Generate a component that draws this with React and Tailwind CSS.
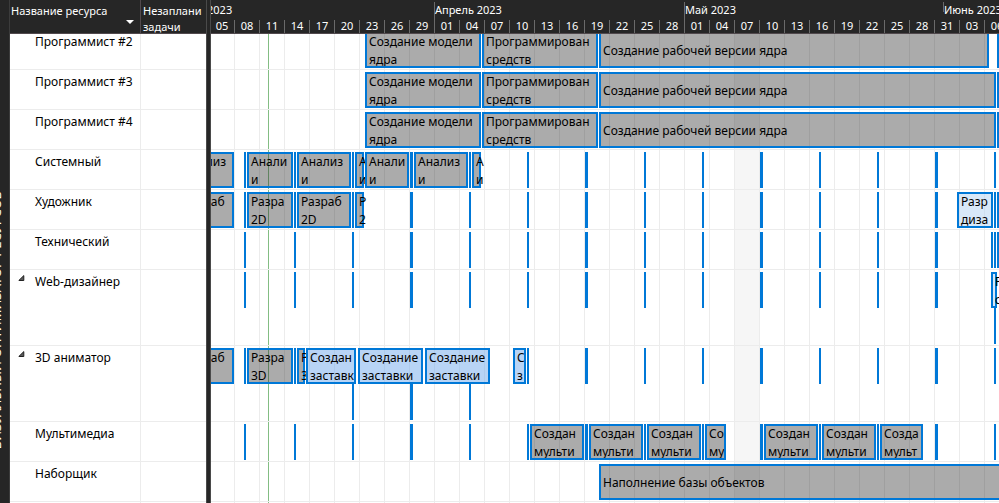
const ORIGIN = 211;
const TICKS = [244, 294, 352, 410, 469, 527, 585, 644, 702, 760, 819, 877, 935, 994];
const WIDE_TICKS = [410, 585, 760, 935];

const FILLS = {
  gray: "bg-[#2d2d2d]/40",
  blue: "bg-[#71a9eb]/50",
  light: "bg-[#b1d1f1]/50",
};

const engineBars = (end) => [
  { from: 365, to: 481, lines: ["Создание модели", "ядра"] },
  { from: 482, to: 598, lines: ["Программирован", "средств"] },
  { from: 599, to: end, lines: ["Создание рабочей версии ядра"] },
];

const ROWS = [
  { name: "Программист #2", bars: engineBars(989), ticks: [997] },
  { name: "Программист #3", bars: engineBars(996), ticks: [997] },
  { name: "Программист #4", bars: engineBars(996), ticks: [997] },
  {
    name: "Системный",
    ticks: TICKS,
    bars: [
      { from: 180, to: 234, lines: ["Анализ", "и"] },
      { from: 247, to: 293, lines: ["Анали", "и"] },
      { from: 297, to: 351, lines: ["Анализ", "и"] },
      { from: 355, to: 364, lines: ["А", "и"] },
      { from: 365, to: 409, lines: ["Анали", "и"] },
      { from: 414, to: 468, lines: ["Анализ", "и"] },
      { from: 472, to: 481, lines: ["А", "и"] },
    ],
  },
  {
    name: "Художник",
    ticks: [...TICKS, 997],
    bars: [
      { from: 180, to: 234, lines: ["Разраб", "2D"] },
      { from: 247, to: 293, lines: ["Разра", "2D"] },
      { from: 297, to: 351, lines: ["Разраб", "2D"] },
      { from: 355, to: 364, lines: ["Р", "2"] },
      { from: 957, to: 993, fill: "light", lines: ["Разр", "диза"] },
    ],
  },
  { name: "Технический", ticks: [...TICKS, 991, 997], bars: [] },
  {
    name: "Web-дизайнер",
    tall: true,
    ticks: TICKS.filter((x) => x !== 994),
    lowerTicks: [994],
    bars: [{ from: 991, to: 997, fill: "light", lines: ["Р", "с"] }],
  },
  {
    name: "3D аниматор",
    tall: true,
    ticks: TICKS.filter((x) => ![352, 410, 469].includes(x)),
    lowerTicks: [352, 410, 469],
    bars: [
      { from: 180, to: 234, lines: ["Разраб", "3D"] },
      { from: 247, to: 293, lines: ["Разра", "3D"] },
      { from: 297, to: 305, lines: ["Р", "3"] },
      { from: 306, to: 356, fill: "blue", lines: ["Создан", "заставк"] },
      { from: 358, to: 423, fill: "blue", lines: ["Создание", "заставки"] },
      { from: 425, to: 490, fill: "blue", lines: ["Создание", "заставки"] },
      { from: 513, to: 526, fill: "blue", lines: ["С", "з"] },
    ],
  },
  {
    name: "Мультимедиа",
    ticks: TICKS,
    bars: [
      { from: 530, to: 584, lines: ["Создан", "мульти"] },
      { from: 589, to: 643, lines: ["Создан", "мульти"] },
      { from: 647, to: 701, lines: ["Создан", "мульти"] },
      { from: 705, to: 726, lines: ["Со", "му"] },
      { from: 764, to: 818, lines: ["Создан", "мульти"] },
      { from: 822, to: 876, lines: ["Создан", "мульти"] },
      { from: 880, to: 923, lines: ["Созда", "мульт"] },
    ],
  },
  { name: "Наборщик", ticks: [], bars: [{ from: 599, to: 1100, lines: ["Наполнение базы объектов"] }] },
  { name: "", ticks: [], bars: [] },
];

const DAYS = [
  "05", "08", "11", "14", "17", "20", "23", "26", "29", "01", "04", "07", "10", "13", "16", "19",
  "22", "25", "28", "01", "04", "07", "10", "13", "16", "19", "22", "25", "28", "31", "03", "06",
];

function Bar({ from, to, fill = "gray", lines }) {
  const clip = to - from > 14 ? "overflow-hidden" : "";
  return (
    <div
      className={`absolute top-[2px] flex h-9 flex-col justify-center border-2 border-[#0078d7] pt-[2px] pl-[2px] whitespace-nowrap ${FILLS[fill]} ${clip}`}
      style={{ left: from - ORIGIN, width: to - from }}
    >
      {lines.map((line, i) => (
        <div key={i} className="h-[18px] shrink-0 leading-[18px]">
          {line}
        </div>
      ))}
    </div>
  );
}

function Tick({ x, lower }) {
  return (
    <div
      className={`absolute h-9 bg-[#0078d7] ${lower ? "top-[38px]" : "top-[2px]"} ${WIDE_TICKS.includes(x) ? "w-[3px]" : "w-[2px]"}`}
      style={{ left: x - ORIGIN }}
    />
  );
}

const rowHeight = (row) => (row.tall ? "h-[76px]" : "h-10");

function ResourceTable() {
  return (
    <div className="w-[196px] shrink-0 overflow-hidden">
      <div className="relative z-10 flex h-[34px] border-b border-[#51494d] bg-[#262626] text-[11px] leading-4 text-white">
        <div className="relative w-[131px] shrink-0 border-r border-[#51494d] pt-[3px] pl-px">
          Название ресурса
          <button aria-label="Сортировка" className="absolute top-5 right-[6px]">
            <svg width="8" height="4" viewBox="0 0 8 4" fill="white" className="block">
              <path d="M0 0h8L4 4z" />
            </svg>
          </button>
        </div>
        <div className="w-[65px] overflow-hidden pt-[3px] pl-[2px] whitespace-nowrap">
          Незаплани
          <br />
          задачи
        </div>
      </div>
      <div className="-mt-1">
        {ROWS.map((row, i) => (
          <div key={i} className={`flex border-b border-[#ececec] ${rowHeight(row)}`}>
            <div className="flex w-[131px] shrink-0 items-start border-r border-[#ececec] pt-[3px]">
              <div className="w-[25px] shrink-0 pt-[2px] pl-2">
                {row.tall && (
                  <button aria-label="Свернуть" className="block">
                    <svg width="7" height="6" viewBox="0 0 7 6" fill="#5a5a5a" stroke="#222" strokeWidth="1">
                      <path d="M0.8 5.5H5.8V0.6z" />
                    </svg>
                  </button>
                )}
              </div>
              <span className="leading-[18px] whitespace-nowrap">{row.name}</span>
            </div>
          </div>
        ))}
      </div>
    </div>
  );
}

function Timeline() {
  return (
    <div className="min-w-0 flex-1 overflow-hidden">
      <div className="relative z-10 h-[34px] border-b border-[#51494d] bg-[#262626] text-[11px] text-white">
        <div className="flex h-5 pt-[2px] leading-4 whitespace-nowrap">
          <div className="flex w-[223px] shrink-0 justify-start">
            <span className="-ml-1">2023</span>
          </div>
          <div className="w-[250px] shrink-0 border-l border-[#6a6a6a]">Апрель 2023</div>
          <div className="w-[259px] shrink-0 border-l border-[#6a6a6a]">Май 2023</div>
          <div className="h-[10px] shrink-0 border-l border-[#6a6a6a]">Июнь 2023</div>
        </div>
        <div className="-ml-px flex h-[13px]">
          {DAYS.map((day, i) => (
            <div key={i} className="w-[25px] shrink-0 border-r border-[#6a6a6a] text-center leading-3">
              {day}
            </div>
          ))}
        </div>
      </div>
      <div className="relative -mt-1">
        <div className="absolute inset-y-0 left-0 -ml-px flex">
          {DAYS.map((_, i) => (
            <div key={i} className={`w-[25px] shrink-0 border-r border-[#ececec] ${i === 21 ? "bg-[#f6f6f6]" : ""}`} />
          ))}
        </div>
        <div className="absolute inset-y-0 left-[57px] w-px bg-[#83bd83]" />
        {ROWS.map((row, i) => (
          <div key={i} className={`relative border-b border-[#ececec] ${rowHeight(row)}`}>
            {row.ticks.map((x) => (
              <Tick key={x} x={x} />
            ))}
            {row.lowerTicks?.map((x) => (
              <Tick key={x} x={x} lower />
            ))}
            {row.bars.map((bar) => (
              <Bar key={bar.from} {...bar} />
            ))}
          </div>
        ))}
      </div>
    </div>
  );
}

export default function App() {
  return (
    <main className="flex h-screen overflow-hidden bg-white font-['Noto_Sans','Open_Sans',sans-serif] text-[12px] text-black">
      <aside className="relative w-[10px] shrink-0 overflow-hidden border-r border-[#3c3c3c] bg-[#262626]">
        <div className="absolute top-[191px] right-[5px] rotate-180 text-[13px] leading-4 whitespace-nowrap text-white [writing-mode:vertical-rl]">
          ВИЗУАЛЬНЫЙ ОПТИМИЗАТОР РЕСУРСОВ
        </div>
      </aside>
      <ResourceTable />
      <div className="w-[5px] shrink-0 border-x border-[#4a4a4a] bg-[#262626]" />
      <Timeline />
    </main>
  );
}
